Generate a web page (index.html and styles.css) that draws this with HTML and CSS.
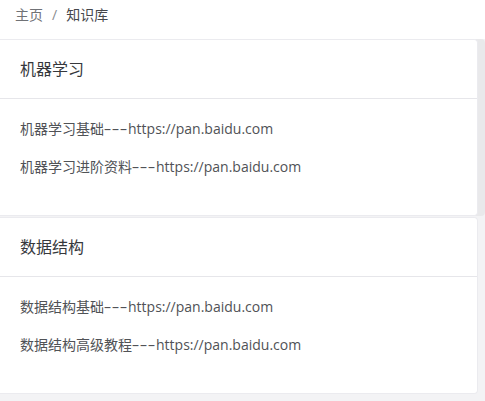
FILE: index.html
```html
<!DOCTYPE html>
<html lang="zh-CN">
<head>
<meta charset="utf-8">
<title>知识库</title>
<link rel="stylesheet" href="styles.css">
</head>
<body>
<nav class="breadcrumb">
  <span class="crumb crumb-home">主页</span>
  <span class="sep">/</span>
  <span class="crumb crumb-current">知识库</span>
</nav>
<main class="content">
  <section class="card card-first">
    <div class="card-header">机器学习</div>
    <div class="card-body">
      <div class="item">机器学习基础<span class="dash">–––</span>https://pan.baidu.com</div>
      <div class="item">机器学习进阶资料<span class="dash">–––</span>https://pan.baidu.com</div>
    </div>
  </section>
  <section class="card">
    <div class="card-header">数据结构</div>
    <div class="card-body">
      <div class="item">数据结构基础<span class="dash">–––</span>https://pan.baidu.com</div>
      <div class="item">数据结构高级教程<span class="dash">–––</span>https://pan.baidu.com</div>
    </div>
  </section>
</main>
</body>
</html>
```

FILE: styles.css
```css
html, body {
  margin: 0;
  padding: 0;
  background: #ffffff;
  font-family: "Open Sans", "Noto Sans CJK SC", sans-serif;
}

.breadcrumb {
  height: 39px;
  display: flex;
  align-items: center;
  padding: 0 0 10px 15px;
  box-sizing: border-box;
  font-size: 14px;
  line-height: 20px;
}

.crumb-home {
  color: #707276;
}

.sep {
  color: #8a8c90;
  margin: 0 9px 0 9px;
}

.crumb-current {
  color: #45474b;
}

.content {
  background: #f3f3f5;
  padding: 0 7px 9px 0;
  display: flex;
  flex-direction: column;
  gap: 1px;
}

.card {
  background: #ffffff;
  border: 1px solid #ebebef;
  border-left: none;
  border-radius: 0 4px 4px 0;
  color: #303133;
}

.card-first {
  box-shadow: 7px 0 0 #e9e9eb;
}

.card-header {
  padding: 18px 20px;
  font-size: 16px;
  line-height: 22px;
  border-bottom: 1px solid #e6e6ea;
  color: #36383c;
}

.card-body {
  padding: 20px;
  font-size: 14px;
  line-height: 20px;
  color: #505256;
}

.item {
  margin-bottom: 18px;
}

.dash {
  letter-spacing: 1px;
}
```
